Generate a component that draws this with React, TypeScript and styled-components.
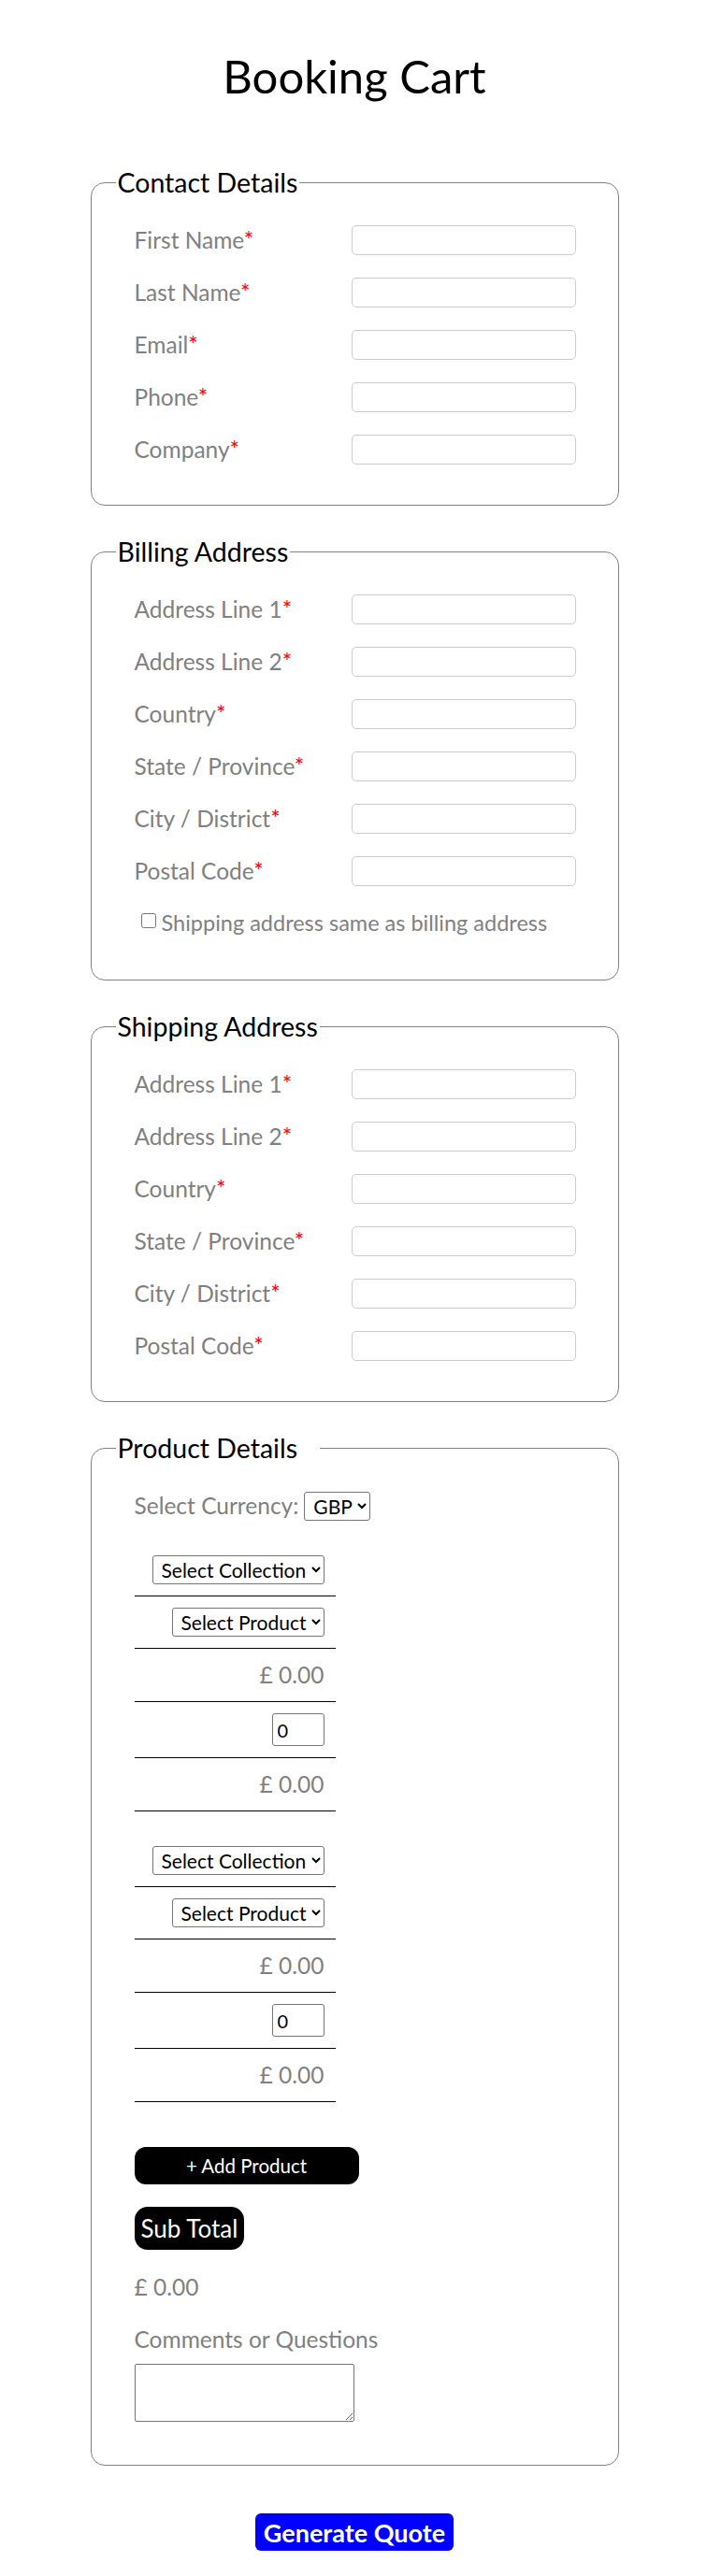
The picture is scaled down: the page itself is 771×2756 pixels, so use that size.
import { createGlobalStyle } from "styled-components";
import styled from "styled-components";

const GlobalStyle = createGlobalStyle`
  body {
    margin: 0;
    font-family: Lato, "Noto Sans", sans-serif;
    background: #fff;
  }
  * {
    box-sizing: border-box;
  }
`;

const contactFields = ["First Name", "Last Name", "Email", "Phone", "Company"];
const addressFields = [
  "Address Line 1",
  "Address Line 2",
  "Country",
  "State / Province",
  "City / District",
  "Postal Code",
];

function FieldList({ fields }: { fields: string[] }) {
  return (
    <Fields>
      {fields.map((name) => (
        <FieldRow key={name}>
          <Label>
            {name}
            <Star>*</Star>
          </Label>
          <TextInput type="text" />
        </FieldRow>
      ))}
    </Fields>
  );
}

function ProductLine() {
  return (
    <ProductTable>
      <Cell>
        <Select defaultValue="">
          <option value="">Select Collection</option>
        </Select>
      </Cell>
      <Cell>
        <Select defaultValue="">
          <option value="">Select Product</option>
        </Select>
      </Cell>
      <Cell>
        <Amount>£ 0.00</Amount>
      </Cell>
      <Cell $tall>
        <QtyInput type="text" defaultValue="0" />
      </Cell>
      <Cell>
        <Amount>£ 0.00</Amount>
      </Cell>
    </ProductTable>
  );
}

export default function App() {
  return (
    <>
      <GlobalStyle />
      <Page>
        <Title>Booking Cart</Title>
        <Form onSubmit={(e) => e.preventDefault()}>
          <Section>
            <Legend>Contact Details</Legend>
            <FieldList fields={contactFields} />
          </Section>

          <Section $bottom={46}>
            <Legend>Billing Address</Legend>
            <FieldList fields={addressFields} />
            <CheckRow>
              <CheckBox type="checkbox" />
              Shipping address same as billing address
            </CheckRow>
          </Section>

          <Section>
            <Legend>Shipping Address</Legend>
            <FieldList fields={addressFields} />
          </Section>

          <Section $bottom={46}>
            <Legend $trail>Product Details</Legend>
            <CurrencyRow>
              <MutedText>Select Currency:</MutedText>
              <Select defaultValue="GBP">
                <option value="GBP">GBP</option>
              </Select>
            </CurrencyRow>
            <ProductLine />
            <ProductLine />
            <Actions>
              <AddButton type="button">+ Add Product</AddButton>
              <SubTotalButton type="button">Sub Total</SubTotalButton>
            </Actions>
            <TotalValue>£ 0.00</TotalValue>
            <CommentsLabel>Comments or Questions</CommentsLabel>
            <Comments />
          </Section>

          <QuoteButton type="submit">Generate Quote</QuoteButton>
        </Form>
      </Page>
    </>
  );
}

const Page = styled.div`
  padding: 52px 13px 29px 0;
`;

const Title = styled.h1`
  margin: 0 0 67px;
  text-align: center;
  font-size: 49px;
  line-height: 58px;
  font-weight: 400;
  color: #000;
`;

const Form = styled.form`
  width: 565px;
  margin: 0 auto;
`;

const Section = styled.fieldset<{ $bottom?: number }>`
  margin: 0 0 31px;
  padding: 28px 45px ${(p) => p.$bottom ?? 43}px 46px;
  border: 1px solid #808080;
  border-radius: 15px;
  min-width: 0;
`;

const Legend = styled.legend<{ $trail?: boolean }>`
  margin-left: -20px;
  padding: 0 ${(p) => (p.$trail ? 24 : 2)}px 0 2px;
  font-size: 28.5px;
  line-height: 36px;
  color: #000;
`;

const Fields = styled.div`
  display: grid;
  gap: 24px;
`;

const FieldRow = styled.div`
  display: grid;
  grid-template-columns: 1fr 240px;
  align-items: center;
`;

const Label = styled.label`
  font-size: 24.5px;
  line-height: 32px;
  color: #808080;
`;

const Star = styled.span`
  color: #ff0000;
`;

const TextInput = styled.input`
  width: 240px;
  height: 32px;
  border: 1px solid #cccccc;
  border-radius: 5px;
  background: #fff;
`;

const CheckRow = styled.label`
  display: flex;
  align-items: center;
  margin-top: 24px;
  height: 30px;
  font-size: 23.5px;
  color: #808080;
`;

const CheckBox = styled.input`
  width: 16px;
  height: 16px;
  margin: 0 6px 4px 7px;
`;

const MutedText = styled.span`
  font-size: 24.5px;
  line-height: 32px;
  color: #808080;
`;

const CurrencyRow = styled.div`
  display: flex;
  align-items: center;
  gap: 6px;
  height: 32px;
`;

const Select = styled.select`
  height: 31px;
  padding: 0 2px 0 5px;
  font-family: inherit;
  font-size: 21px;
  color: #000;
  background: #fff;
  border: 1px solid #767676;
  border-radius: 3px;
`;

const ProductTable = styled.div`
  width: 215px;
  margin-top: 25px;
`;

const Cell = styled.div<{ $tall?: boolean }>`
  display: flex;
  justify-content: flex-end;
  align-items: center;
  min-height: ${(p) => (p.$tall ? 60 : 56)}px;
  padding: 12px;
  border-bottom: 1px solid #000;
`;

const Amount = styled.span`
  font-size: 24.5px;
  line-height: 32px;
  color: #808080;
`;

const QtyInput = styled.input`
  width: 56px;
  height: 35px;
  padding: 0 0 0 5px;
  font-family: inherit;
  font-size: 20px;
  color: #000;
  border: 1px solid #767676;
  border-radius: 3px;
`;

const Actions = styled.div`
  display: flex;
  flex-direction: column;
  align-items: flex-start;
  gap: 24px;
  margin-top: 48px;
`;

const AddButton = styled.button`
  width: 240px;
  height: 40px;
  border: none;
  border-radius: 12px;
  background: #000;
  color: #fff;
  font-family: inherit;
  font-size: 20.5px;
  cursor: pointer;
`;

const SubTotalButton = styled.button`
  height: 46px;
  padding: 0 7px;
  border: none;
  border-radius: 14px;
  background: #000;
  color: #fff;
  font-family: inherit;
  font-size: 26px;
  cursor: pointer;
`;

const TotalValue = styled.div`
  margin-top: 22px;
  font-size: 24.5px;
  line-height: 36px;
  color: #808080;
`;

const CommentsLabel = styled.label`
  display: block;
  margin-top: 20px;
  font-size: 24.5px;
  line-height: 36px;
  color: #808080;
`;

const Comments = styled.textarea`
  display: block;
  width: 235px;
  height: 62px;
  margin-top: 8px;
  border: 1px solid #767676;
  border-radius: 2px;
`;

const QuoteButton = styled.button`
  display: block;
  height: 40px;
  margin: 51px auto 0;
  padding: 0 9px;
  border: none;
  border-radius: 6px;
  background: #0000ff;
  color: #fff;
  font-family: inherit;
  font-size: 27px;
  font-weight: 700;
  cursor: pointer;
`;
